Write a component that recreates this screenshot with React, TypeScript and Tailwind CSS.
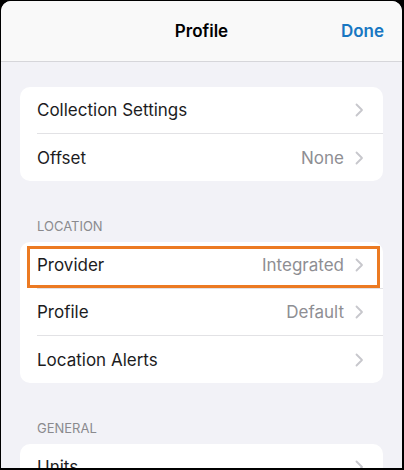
import React from "react";

type Row = { label: string; value?: string; highlight?: boolean };

const Chevron = () => (
  <svg width="9" height="14" viewBox="0 0 9 14" className="shrink-0">
    <polyline points="1.5,1.5 7,7 1.5,12.5" fill="none" stroke="#c7c7cc" strokeWidth="1.8" strokeLinecap="round" strokeLinejoin="round" />
  </svg>
);

const Card = ({ rows }: { rows: Row[] }) => (
  <div className="bg-white rounded-[10px]">
    {rows.map((r, i) => (
      <div key={r.label} className="relative flex items-center h-[47px] pl-[17px]">
        {r.highlight && (
          <div className="absolute left-[7px] top-[4px] w-[353px] h-[42px] border-[3px] border-[#ec7a22]" />
        )}
        <div
          className={
            "flex items-center h-full flex-1 pr-[19px] " +
            (i < rows.length - 1 ? "border-b border-[#e2e2e5]" : "")
          }
        >
          <span className="flex-1 pt-[2px] text-[17px] text-[#1c1c1e]">{r.label}</span>
          {r.value && <span className="pt-[2px] text-[17px] text-[#8e8e93] mr-[11px]">{r.value}</span>}
          <Chevron />
        </div>
      </div>
    ))}
  </div>
);

const SectionLabel = ({ text }: { text: string }) => (
  <div className="pt-[37px] pb-[8px] pl-[17px] text-[13px] leading-[16px] text-[#8a8a8e]">{text}</div>
);

export default function App() {
  return (
    <div className="w-[404px] h-[470px] bg-black pt-[1px] pl-[1px] pr-[2px] pb-[2px] overflow-hidden" style={{ fontFamily: "Inter, 'Liberation Sans', sans-serif" }}>
      <div className="h-full bg-[#f2f2f7] rounded-t-[10px] overflow-hidden">
        <div className="relative h-[61px] pt-[2px] bg-[#f9f9f9] border-b border-[#d6d6da] flex items-center justify-center">
          <span className="text-[17px] font-semibold text-black">Profile</span>
          <span className="absolute right-[18px] text-[17px] font-semibold text-[#1877c2]">Done</span>
        </div>
        <div className="px-[19px] pt-[25px]">
          <Card rows={[{ label: "Collection Settings" }, { label: "Offset", value: "None" }]} />
          <SectionLabel text="LOCATION" />
          <Card
            rows={[
              { label: "Provider", value: "Integrated", highlight: true },
              { label: "Profile", value: "Default" },
              { label: "Location Alerts" },
            ]}
          />
          <SectionLabel text="GENERAL" />
          <Card rows={[{ label: "Units" }, { label: "Appearance" }]} />
        </div>
      </div>
    </div>
  );
}
